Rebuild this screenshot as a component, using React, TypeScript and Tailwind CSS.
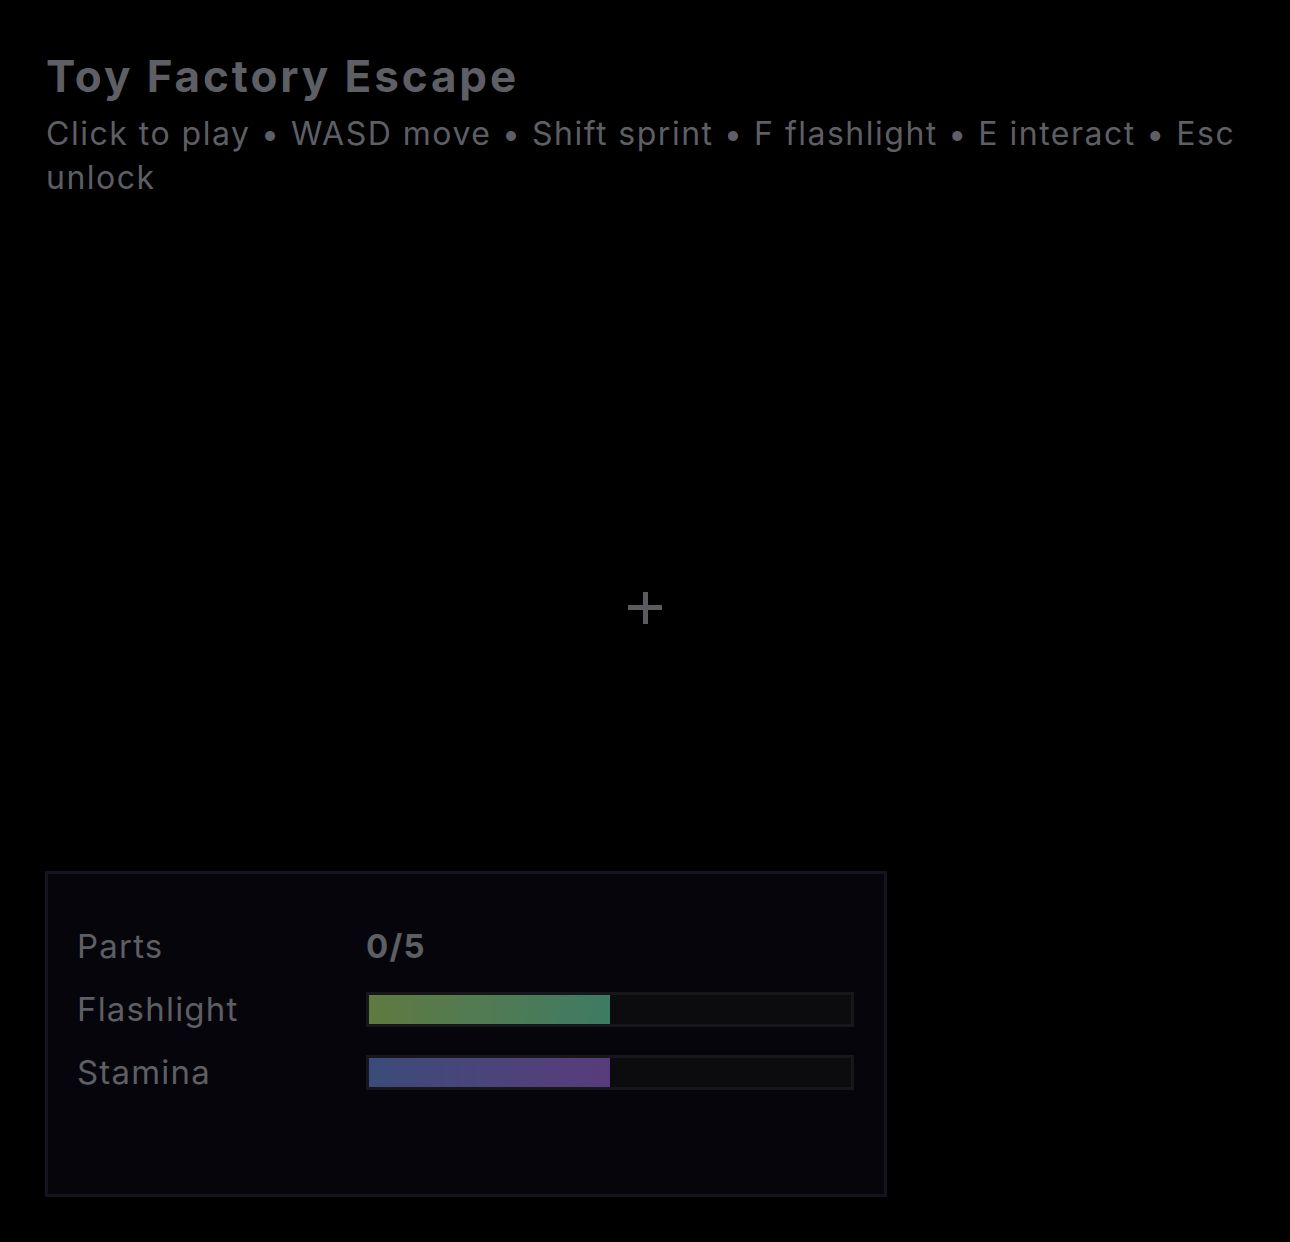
import React from "react";

type Meter = { label: string; value: number; fill: string };

const meters: Meter[] = [
  { label: "Flashlight", value: 0.5, fill: "bg-gradient-to-r from-[#5f7a40] to-[#3d7b63]" },
  { label: "Stamina", value: 0.5, fill: "bg-gradient-to-r from-[#3a4b79] to-[#583b7b]" },
];

function Bar({ value, fill }: { value: number; fill: string }) {
  return (
    <div className="h-[35px] w-full border-[3px] border-[#17171b] bg-[#0c0c0e]">
      <div className={`h-full ${fill}`} style={{ width: `${value * 100}%` }} />
    </div>
  );
}

export default function App() {
  return (
    <div
      className="relative flex h-[1242px] w-full flex-col bg-black text-[#5e5f64]"
      style={{ fontFamily: "Inter, Roboto, 'Liberation Sans', sans-serif" }}
    >
      {/* HEADER */}
      <header className="px-[46px] pt-[48px]">
        <h1 className="text-[44px] font-bold leading-[56px] tracking-[2.9px]">Toy Factory Escape</h1>
        <p className="mt-[8px] text-[32px] leading-[44px] tracking-[1.5px]">
          Click to play • WASD move • Shift sprint • F flashlight • E interact • Esc unlock
        </p>
      </header>

      {/* CROSSHAIR */}
      <div className="pointer-events-none absolute left-[628px] top-[592px] h-[32px] w-[34px]">
        <div className="absolute left-0 top-[13px] h-[5px] w-[34px] bg-[#5a5b60]" />
        <div className="absolute left-[15px] top-0 h-[32px] w-[5px] bg-[#5a5b60]" />
      </div>

      <div className="flex-1" />

      {/* HUD PANEL */}
      <section className="mb-[45px] ml-[45px] h-[326px] w-[842px] border-[3px] border-[#14131e] bg-[#06050b] pl-[29px] pr-[30px] pt-[55px]">
        <div className="grid grid-cols-[289px_1fr] items-center gap-y-[28px] text-[33px] leading-[35px] tracking-[1.2px]">
          <div>Parts</div>
          <div className="font-bold">0/5</div>
          {meters.map((m) => (
            <React.Fragment key={m.label}>
              <div>{m.label}</div>
              <Bar value={m.value} fill={m.fill} />
            </React.Fragment>
          ))}
        </div>
      </section>
    </div>
  );
}
